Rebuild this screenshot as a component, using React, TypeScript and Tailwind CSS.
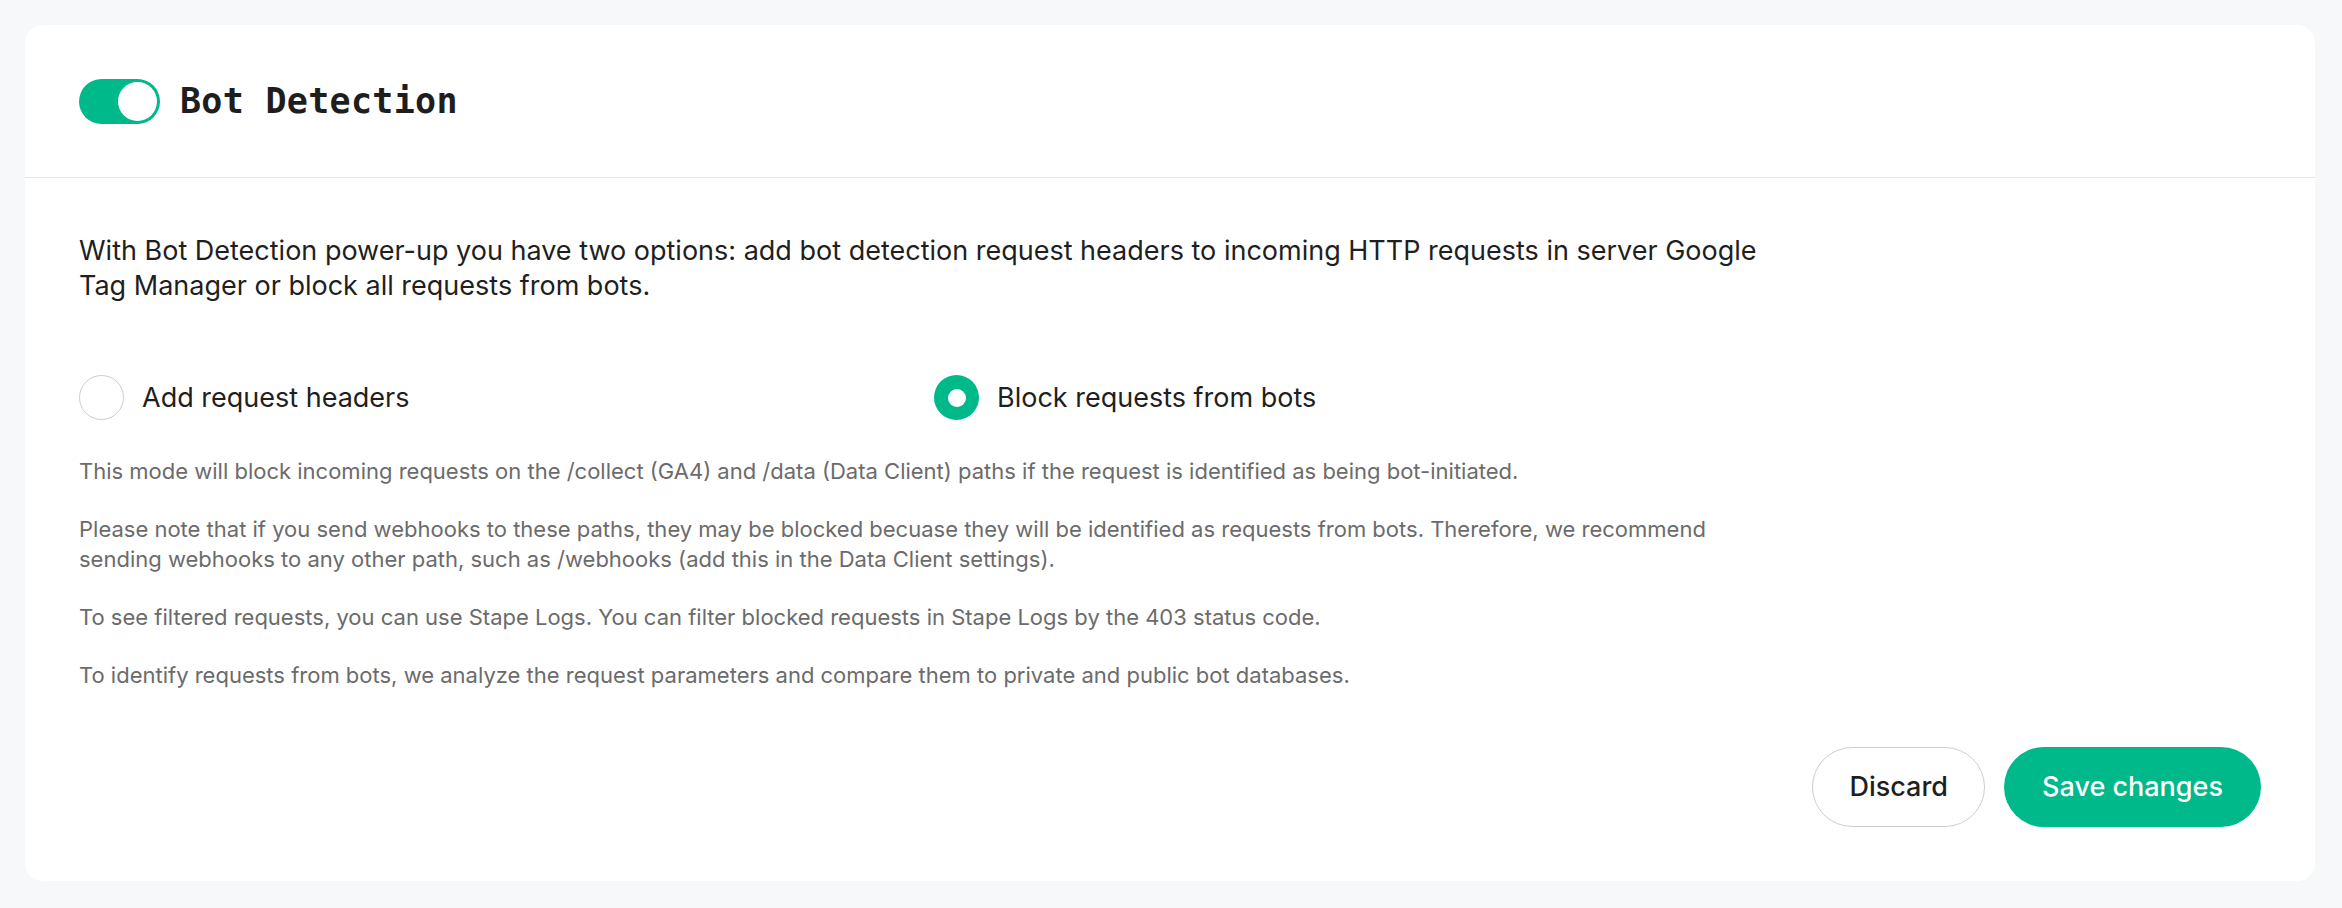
import { useState } from "react";

type Mode = "headers" | "block";

const notes = [
    "This mode will block incoming requests on the /collect (GA4) and /data (Data Client) paths if the request is identified as being bot-initiated.",
    "Please note that if you send webhooks to these paths, they may be blocked becuase they will be identified as requests from bots. Therefore, we recommend sending webhooks to any other path, such as /webhooks (add this in the Data Client settings).",
    "To see filtered requests, you can use Stape Logs. You can filter blocked requests in Stape Logs by the 403 status code.",
    "To identify requests from bots, we analyze the request parameters and compare them to private and public bot databases.",
];

export default function App() {
    const [enabled, setEnabled] = useState(true);
    const [mode, setMode] = useState<Mode>("block");

    return <div className="min-h-screen bg-[#f7f8fa] pt-[25px] pb-[26px] pl-[25px] pr-[27px] font-['Inter',sans-serif] text-[#1f1f1f]">
        <div className="rounded-[18px] bg-white">
            <div className="flex h-[153px] items-center gap-5 border-b border-[#e4e5e8] px-[54px]">
                <button
                    onClick={() => setEnabled(!enabled)}
                    className={"flex h-[45px] w-[81px] items-center rounded-full p-[3px] " +
                        (enabled ? "justify-end bg-[#00b98b]" : "justify-start bg-[#d1d5db]")}
                >
                    <span className="size-[39px] rounded-full bg-white" />
                </button>
                <h2 className="font-['DejaVu_Sans_Mono',monospace] text-[35px] font-bold tracking-[0.3px] text-[#1e1e1e]">Bot Detection</h2>
            </div>
            <div className="px-[54px] pt-[55px] pb-[54px]">
                <div className="max-w-[1710px]">
                    <p className="text-[27px] leading-[35px]">
                        With Bot Detection power-up you have two options: add bot detection request headers to incoming HTTP requests in server Google Tag Manager or block all requests from bots.
                    </p>
                    <div className="mt-[72px] grid grid-cols-2">
                        <RadioOption label="Add request headers" checked={mode == "headers"} onSelect={() => setMode("headers")} />
                        <RadioOption label="Block requests from bots" checked={mode == "block"} onSelect={() => setMode("block")} />
                    </div>
                    <div className="mt-[36px] flex flex-col gap-[28px] text-[22px] leading-[30px] text-[#6b6b6b]">
                        {notes.map(note => <p key={note}>{note}</p>)}
                    </div>
                </div>
                <div className="mt-[57px] flex justify-end gap-[19px]">
                    <button className="h-[80px] rounded-full border-[1.5px] border-[#c9ced6] bg-white px-[36px] text-[27px] font-medium text-[#1f1f1f]">Discard</button>
                    <button className="h-[80px] rounded-full bg-[#00b98b] px-[38px] text-[27px] font-medium text-white">Save changes</button>
                </div>
            </div>
        </div>
    </div>;
}

function RadioOption({
    label,
    checked,
    onSelect,
}: {
    label: string,
    checked: boolean,
    onSelect: () => void
}) {
    return <label className="flex cursor-pointer items-center gap-[18px]" onClick={onSelect}>
        {checked
            ? <span className="flex size-[45px] items-center justify-center rounded-full bg-[#00b98b]">
                <span className="size-[18px] rounded-full bg-white" />
            </span>
            : <span className="size-[45px] rounded-full border-[1.5px] border-[#c9ced6] bg-white" />}
        <span className="text-[27px] leading-[35px]">{label}</span>
    </label>;
}
